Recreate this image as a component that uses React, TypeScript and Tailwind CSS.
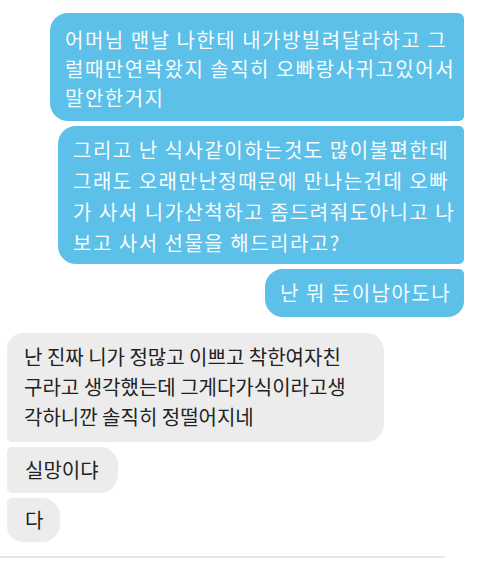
import * as React from 'react';

type Msg = {
  lines: string[];
  className: string;
};

// outgoing (blue) messages, right side
const sent: Msg[] = [
  {
    lines: ['어머님 맨날 나한테 내가방빌려달라하고 그', '럴때만연락왔지 솔직히 오빠랑사귀고있어서', '말안한거지'],
    className: 'w-[414px] pt-[12px] pb-[9px] leading-[29px] rounded-l-[18px] rounded-tr-[6px] rounded-br-[5px]',
  },
  {
    lines: [
      '그리고 난 식사같이하는것도 많이불편한데',
      '그래도 오래만난정때문에 만나는건데 오빠',
      '가 사서 니가산척하고 좀드려줘도아니고 나',
      '보고 사서 선물을 해드리라고?',
    ],
    className: 'w-[406px] pt-[8px] pb-[6px] leading-[31px] rounded-l-[18px] rounded-r-[5px]',
  },
  {
    lines: ['난 뭐 돈이남아도나'],
    className: 'w-[199px] h-[48px] flex items-center rounded-l-[18px] rounded-tr-[5px] rounded-br-[16px]',
  },
];

// incoming (gray) messages, left side
const received: Msg[] = [
  {
    lines: ['난 진짜 니가 정많고 이쁘고 착한여자친', '구라고 생각했는데 그게다가식이라고생', '각하니깐 솔직히 정떨어지네'],
    className: 'w-[377px] pl-[17px] pt-[9px] pb-[10px] leading-[30px] rounded-r-[18px] rounded-tl-[16px] rounded-bl-[5px]',
  },
  {
    lines: ['실망이댜'],
    className: 'w-[111px] h-[46px] pl-[18px] flex items-center rounded-r-[18px] rounded-l-[5px]',
  },
  {
    lines: ['다'],
    className: 'w-[53px] h-[44px] pl-[18px] flex items-center rounded-r-[18px] rounded-tl-[5px] rounded-bl-[16px]',
  },
];

export default function App() {
  return (
    <div
      className="w-[480px] h-[562px] bg-white flex flex-col overflow-hidden"
      style={{ fontFamily: '"Noto Sans CJK KR", "Noto Sans", sans-serif' }}
    >
      <div className="flex flex-col items-end gap-[5px] pt-[13px] pr-[16px]">
        {sent.map((m, i) => (
          <div
            key={i}
            className={`bg-[#5dc0e8] text-[#f7fcff] text-[20px] tracking-[1.5px] pl-[15px] ${m.className}`}
          >
            <div>
              {m.lines.map((l, j) => (
                <span key={j} className="block whitespace-nowrap">
                  {l}
                </span>
              ))}
            </div>
          </div>
        ))}
      </div>

      <div className="flex flex-col items-start gap-[5px] pt-[16px] pl-[7px]">
        {received.map((m, i) => (
          <div key={i} className={`bg-[#ececec] text-[#222222] text-[20px] ${m.className}`}>
            <div>
              {m.lines.map((l, j) => (
                <span key={j} className="block whitespace-nowrap">
                  {l}
                </span>
              ))}
            </div>
          </div>
        ))}
      </div>

      <div className="mt-[14px] h-[2px] w-[445px] bg-[#e6e6e6]" />
    </div>
  );
}
